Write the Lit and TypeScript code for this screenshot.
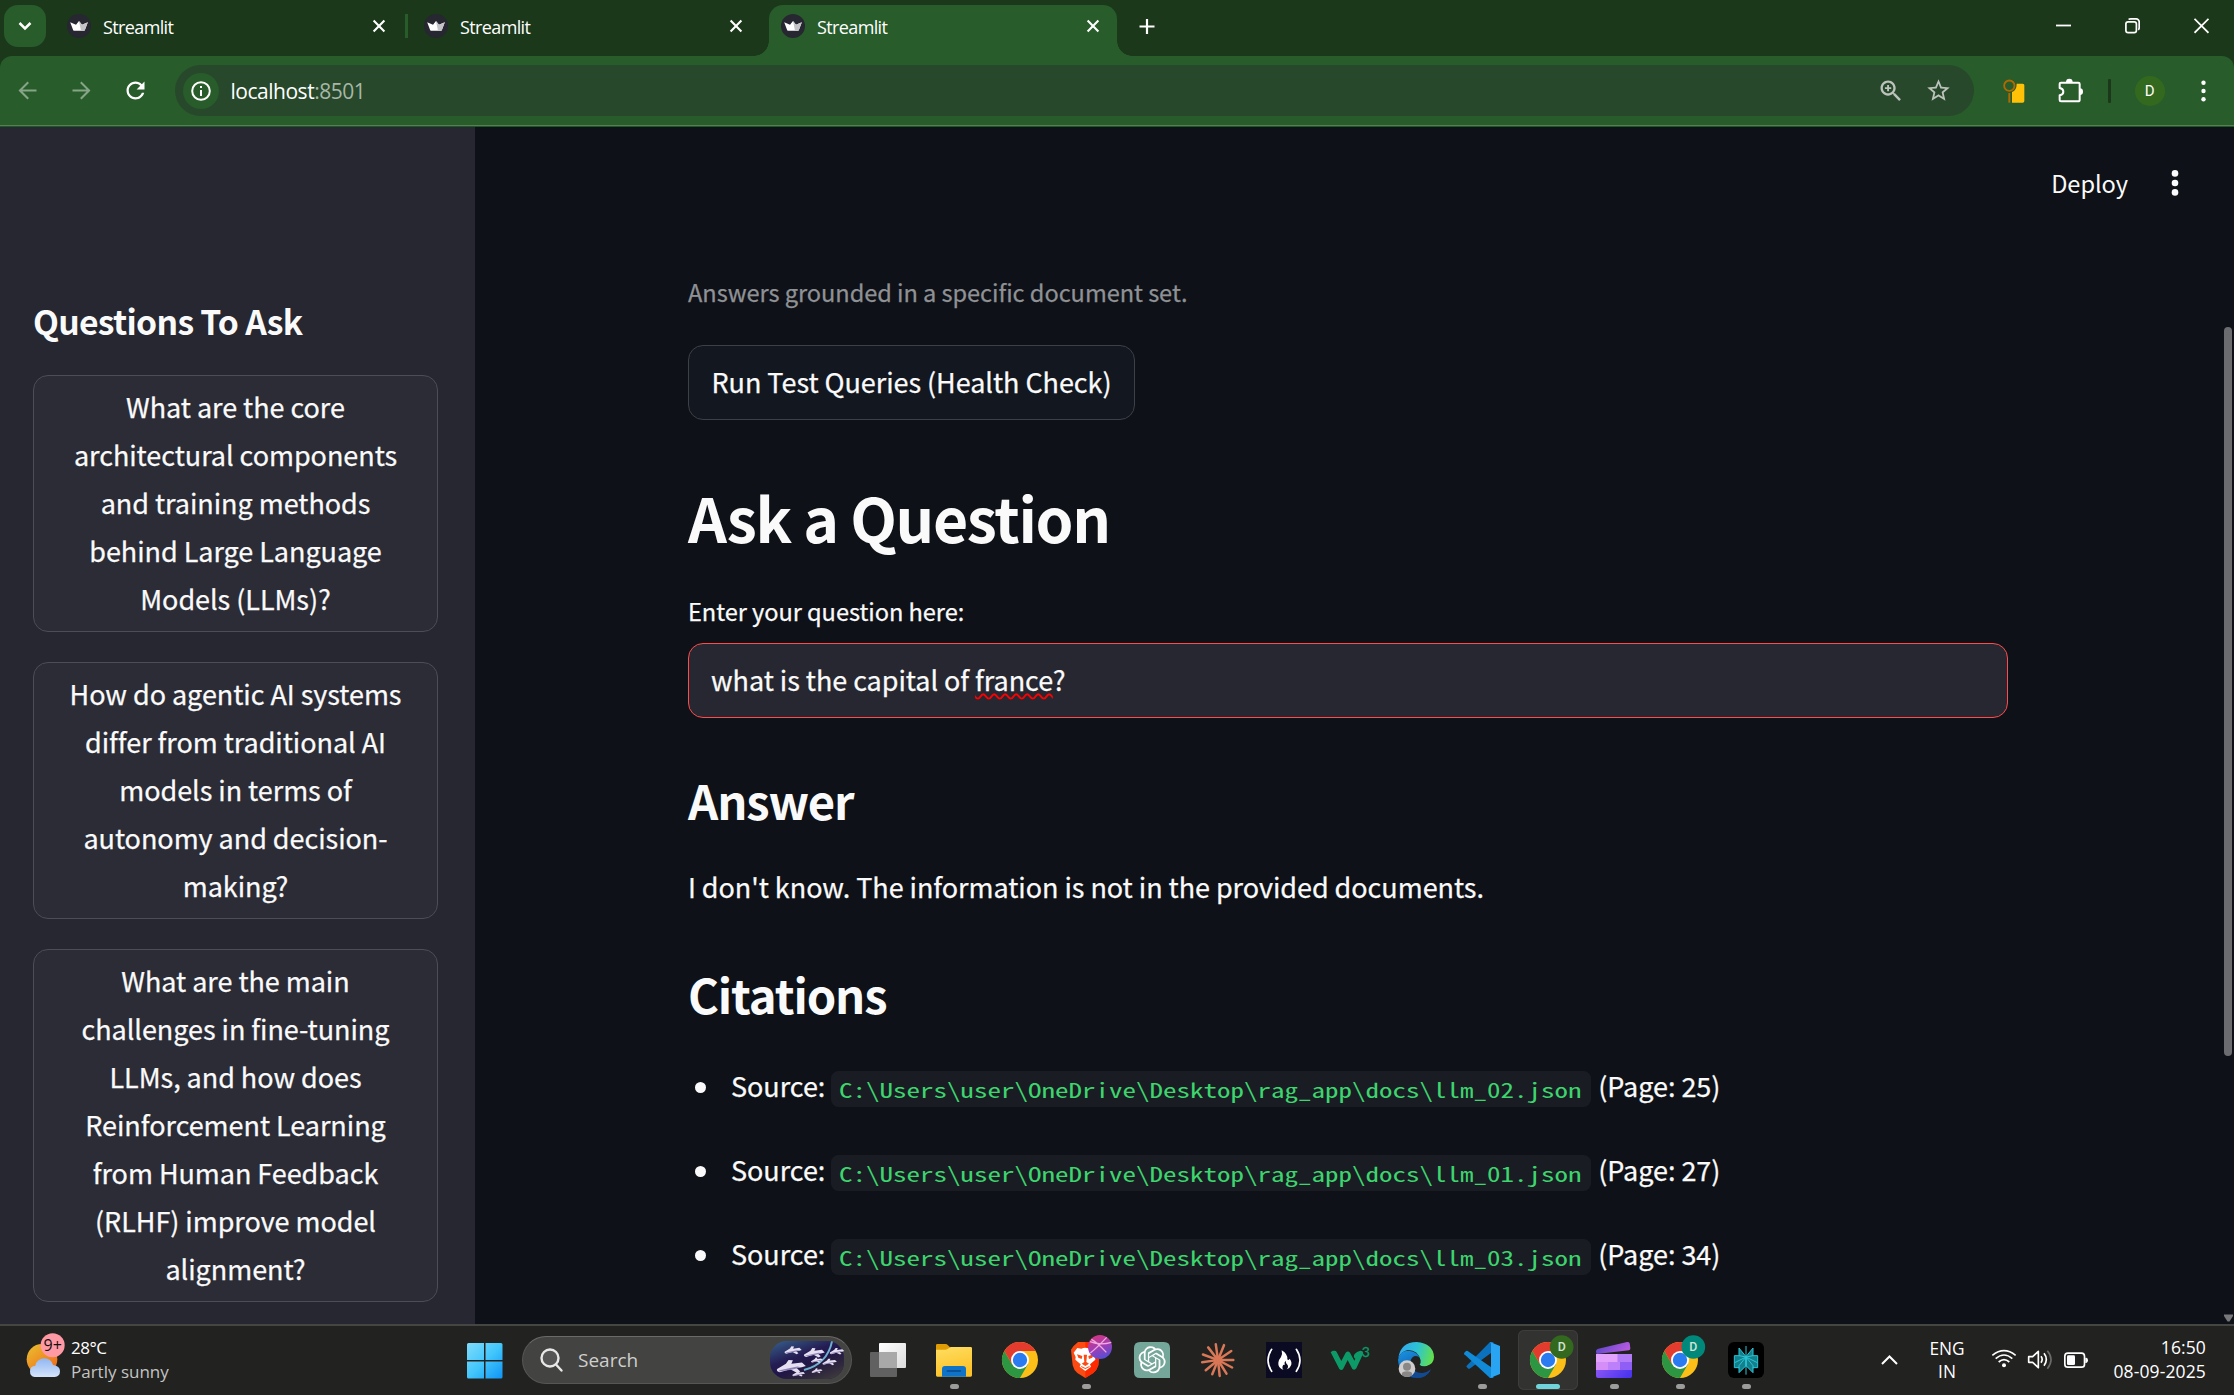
import { LitElement, html, css, svg } from "lit";
import { customElement } from "lit/decorators.js";
import { classMap } from "lit/directives/class-map.js";

const crown = html`<svg class="crown" viewBox="0 0 24 24" width="24" height="24">
  <circle cx="12" cy="12" r="12" fill="#262730" />
  <path d="M3.2 8.2 9 10.8 12 7l3 3.8 5.8-2.6-3 8a.8.8 0 0 1-.7.5H6.900a.8.8 0 0 1-.7-.5z" fill="#fff" />
  <path d="M12 7l3 3.800 5.800-2.600-3 8a.8.8 0 0 1-.7.5H14z" fill="#c4c4c8" />
</svg>`;

@customElement("tab-strip")
class TabStrip extends LitElement {
  static styles = css`
    :host { display: flex; height: 56px; background: #1b381b; color: #fff; font: 18px/24px "Open Sans", "Noto Sans", sans-serif; }
    .menu { width: 42px; height: 42px; margin: 5px 0 0 4px; border-radius: 14px; background: #285c2a; display: grid; place-items: center; }
    .tab { height: 51px; margin-top: 5px; display: flex; align-items: center; padding-bottom: 9px; box-sizing: border-box; }
    .tab .crown { flex: none; }
    .name { margin-left: 12px; flex: 1; letter-spacing: -0.62px; padding-top: 2px; }
    .first { width: 343px; margin-left: 21px; padding-left: 0; padding-right: 24px; }
    .second { width: 361px; padding-left: 16px; padding-right: 26px; border: 0; }
    .sep { width: 3px; height: 24px; margin-top: 14px; background: #285c2a; margin-left: -5px; }
    .active { position: relative; width: 348px; padding-left: 12px; padding-right: 17px; background: #285c2a; border-radius: 14px 14px 0 0; }
    .active::before, .active::after { content: ""; position: absolute; bottom: 0; width: 15px; height: 15px; }
    .active::before { right: 100%; background: radial-gradient(circle at 0 0, transparent 14.5px, #285c2a 15px); }
    .active::after { left: 100%; background: radial-gradient(circle at 100% 0, transparent 14.5px, #285c2a 15px); }
    .plus { margin: 18px 0 0 21px; }
    .win { margin-left: auto; display: flex; gap: 54px; padding: 17.5px 25px 0 0; }
  `;
  x() {
    return html`<svg width="14" height="14" viewBox="0 0 14 14"><path d="M1.600 1.600l10.800 10.800M12.400 1.600 1.600 12.400" stroke="#fff" stroke-width="2.100" /></svg>`;
  }
  render() {
    return html`
      <div class="menu"><svg width="14" height="10" viewBox="0 0 14 10"><path d="M1.500 2l5.500 5.500L12.500 2" fill="none" stroke="#fff" stroke-width="2.500" /></svg></div>
      <div class="tab first">${crown}<span class="name">Streamlit</span>${this.x()}</div>
      <div class="sep"></div>
      <div class="tab second">${crown}<span class="name">Streamlit</span>${this.x()}</div>
      <div class="tab active">${crown}<span class="name">Streamlit</span>${this.x()}</div>
      <svg class="plus" width="18" height="18" viewBox="0 0 18 18"><path d="M9 1v15M1.500 8.500h15" stroke="#fff" stroke-width="2.200" /></svg>
      <div class="win">
        <svg width="15" height="16" viewBox="0 0 15 16"><path d="M0 7.500h15" stroke="#fff" stroke-width="1.800" /></svg>
        <svg width="15" height="16" viewBox="0 0 15 16" fill="none" stroke="#fff" stroke-width="1.700"><rect x="0.900" y="3.800" width="10.500" height="10.800" rx="2.200" /><path d="M3.600 1.500Q4.200.9 6 .9h5.200a3 3 0 0 1 3 3v5.500q0 1.700-.9 2.400" /></svg>
        <svg width="15" height="16" viewBox="0 0 15 16"><path d="M.5.8l14 14M14.500.8l-14 14" stroke="#fff" stroke-width="1.800" /></svg>
      </div>`;
  }
}

@customElement("address-bar")
class AddressBar extends LitElement {
  static styles = css`
    :host { display: block; background: #1b381b; }
    .bar { display: flex; align-items: center; height: 71px; box-sizing: border-box; background: #285c2a; border-radius: 12px 12px 0 0; padding: 0 28.400px 2px 14px; box-shadow: inset 0 -1px #1f5528, inset 0 -2px #548052; }
    .nav { display: flex; gap: 27px; margin-right: 25.500px; }
    .box { flex: 1; display: flex; align-items: center; height: 51px; border-radius: 26px; background: #27482a; padding: 0 22px 0 8px; margin-right: 29px; }
    .info { width: 36px; height: 36px; border-radius: 50%; background: #285c2a; display: grid; place-items: center; margin-right: 12px; }
    .url { flex: 1; color: #fff; font: 21px/30px "Open Sans", "Noto Sans", sans-serif; letter-spacing: -0.480px; }
    .port { color: #a6b7a7; }
    .box .star { margin-left: 20px; }
    .sep { width: 3px; height: 24px; background: #1b381b; margin: 0 24px 0 25px; border-radius: 1px; }
    .ava { width: 30px; height: 30px; border-radius: 50%; background: #33691e; color: #fff; display: grid; place-items: center; font: 15px/30px Roboto, sans-serif; }
    .ext { margin-right: 33px; }
    .dots { margin-left: 36px; }
  `;
  render() {
    return html`<div class="bar">
      <div class="nav">
        <svg width="27" height="27" viewBox="0 0 24 24"><path d="M20 11.100H7.500l5.800-5.800L12 4l-8 8 8 8 1.300-1.300-5.800-5.800H20z" fill="#86a487" /></svg>
        <svg width="27" height="27" viewBox="0 0 24 24"><path d="M4 11.100h12.500l-5.800-5.800L12 4l8 8-8 8-1.300-1.300 5.800-5.800H4z" fill="#86a487" /></svg>
        <svg width="27" height="27" viewBox="0 0 24 24"><path d="M17.650 6.350C16.200 4.900 14.210 4 12 4c-4.420 0-7.990 3.580-7.990 8s3.570 8 7.990 8c3.730 0 6.840-2.550 7.730-6h-2.080c-.82 2.330-3.040 4-5.650 4-3.310 0-6-2.690-6-6s2.690-6 6-6c1.660 0 3.140.69 4.220 1.780L13 11h7V4l-2.350 2.350z" fill="#fff" /></svg>
      </div>
      <div class="box">
        <div class="info"><svg width="20" height="20" viewBox="0 0 20 20"><circle cx="10" cy="10" r="8.800" fill="none" stroke="#fff" stroke-width="2" /><path d="M9 5h2v2H9zM9 9h2v6H9z" fill="#fff" /></svg></div>
        <span class="url">localhost<span class="port">:8501</span></span>
        <svg width="28" height="28" viewBox="0 0 24 24"><path d="M15.500 14h-.79l-.28-.27C15.410 12.590 16 11.110 16 9.500 16 5.910 13.090 3 9.500 3S3 5.910 3 9.500 5.910 16 9.500 16c1.610 0 3.090-.59 4.230-1.570l.27.28v.79l5 4.990L20.490 19l-4.990-5zm-6 0C7.010 14 5 11.990 5 9.500S7.010 5 9.500 5 14 7.010 14 9.500 11.990 14 9.500 14z" fill="#bcc3bc" /><path d="M9.500 6.800v5.400M6.800 9.500h5.400" stroke="#bcc3bc" stroke-width="1.600" /></svg>
        <svg class="star" width="27" height="27" viewBox="0 0 24 24"><path d="M22 9.240l-7.190-.62L12 2 9.190 8.630 2 9.240l5.460 4.730L5.820 21 12 17.270 18.180 21l-1.630-7.030L22 9.240zM12 15.400l-3.760 2.270 1-4.280-3.320-2.880 4.380-.38L12 6.100l1.710 4.040 4.380.38-3.320 2.880 1 4.280L12 15.400z" fill="#bcc3bc" /></svg>
      </div>
      <svg class="ext" width="22" height="24" viewBox="671 235 66 72"><path d="M712 249h18q5 0 5 5v47q0 5-5 5h-32v-32q14-5 14-25z" fill="#ffc107" /><circle cx="690" cy="255" r="15.500" fill="none" stroke="#b26a00" stroke-width="5.500" /><path d="M690 277v29" stroke="#b26a00" stroke-width="6" /></svg>
      <svg width="25" height="25" viewBox="833 231 75 75"><path d="M842 245h52q4 0 4 4v47q0 5-5 5h-51q-4 0-4-4v-14q11-2 11-11t-11-11v-13q0-3 4-3z" fill="none" stroke="#fff" stroke-width="6" stroke-linejoin="round" /><path d="M857 243a10 10 0 0 1 20 0zM898 262a10 10 0 0 1 0 20z" fill="#fff" /></svg>
      <div class="sep"></div>
      <div class="ava">D</div>
      <svg class="dots" width="5" height="22" viewBox="0 0 5 22" fill="#fff"><circle cx="2.500" cy="2.700" r="2.200" /><circle cx="2.500" cy="11" r="2.200" /><circle cx="2.500" cy="19.300" r="2.200" /></svg>
    </div>`;
  }
}

const questions = [
  ["What are the core", "architectural components", "and training methods", "behind Large Language", "Models (LLMs)?"],
  ["How do agentic AI systems", "differ from traditional AI", "models in terms of", "autonomy and decision-", "making?"],
  ["What are the main", "challenges in fine-tuning", "LLMs, and how does", "Reinforcement Learning", "from Human Feedback", "(RLHF) improve model", "alignment?"],
];

@customElement("question-list")
class QuestionList extends LitElement {
  static styles = css`
    :host { display: flex; flex-direction: column; width: 475px; box-sizing: border-box; padding: 170.800px 37px 0 33px; background: #262730; color: #fafafa; font-family: "Noto Sans CJK SC", sans-serif; }
    h2 { margin: 0 0 32.200px; font-size: 33.700px; line-height: 45px; font-weight: 600; letter-spacing: -0.700px; white-space: nowrap; }
    .list { display: flex; flex-direction: column; gap: 30px; }
    .q { border: 1px solid #4c4d56; border-radius: 15px; background: #2b2c36; padding: 6.600px 0 8.400px; text-align: center; font-size: 27px; letter-spacing: -0.050px; line-height: 48px; white-space: nowrap; -webkit-text-stroke: 0.250px #fafafa; }
    .q div { height: 48px; }
  `;
  render() {
    return html`<h2>Questions To Ask</h2>
      <div class="list">${questions.map((q) => html`<div class="q">${q.map((l) => html`<div>${l}</div>`)}</div>`)}</div>`;
  }
}

const citations = [
  { file: "llm_02.json", page: 25 },
  { file: "llm_01.json", page: 27 },
  { file: "llm_03.json", page: 34 },
];

@customElement("answer-page")
class AnswerPage extends LitElement {
  static styles = css`
    :host { display: flex; flex: 1; min-width: 0; background: #0e1117; color: #fafafa; font-family: "Noto Sans CJK SC", sans-serif; font-size: 27px; line-height: 48px; letter-spacing: -0.050px; }
    .page { flex: 1; min-width: 0; }
    header { height: 112px; display: flex; justify-content: flex-end; align-items: center; gap: 37.400px; padding-right: 32.600px; box-sizing: border-box; font-size: 23.600px; }
    .col { padding: 31.700px 0 0 213px; width: 1320px; -webkit-text-stroke: 0.250px; }
    .caption { font-size: 23.600px; line-height: 42px; color: #8f9195; }
    .run { width: 447px; height: 75px; margin-top: 32.300px; box-sizing: border-box; border: 1px solid #3e4047; border-radius: 15px; background: #131720; display: flex; align-items: center; justify-content: center; padding-bottom: 1.800px; white-space: nowrap; }
    h1 { margin: 56px 0 0; font-size: 60.700px; line-height: 81px; font-weight: 600; letter-spacing: -1.330px; -webkit-text-stroke: 0; }
    .label { margin-top: 32.700px; font-size: 23.600px; line-height: 42px; }
    .field { margin-top: 11.300px; height: 75px; box-sizing: border-box; border: 1px solid #ff4b4b; border-radius: 15px; background: #262730; padding: 11.600px 22px 0; }
    .typo { text-decoration: underline wavy #f00 1.500px; text-underline-offset: 2px; text-decoration-skip-ink: none; }
    h2 { margin: 49.900px 0 0; font-size: 47.200px; line-height: 63px; font-weight: 600; letter-spacing: -1.100px; -webkit-text-stroke: 0; }
    .cit { margin-top: 50.700px; }
    p { margin: 32.200px 0 0; }
    .list { margin-top: 37.600px; display: flex; flex-direction: column; gap: 36px; }
    .item { display: flex; align-items: center; height: 48px; white-space: nowrap; padding-left: 7px; }
    .dot { width: 11px; height: 11px; border-radius: 50%; background: #fafafa; margin-right: 25px; margin-top: 2px; }
    .code { font-family: "Noto Sans Mono CJK SC", "DejaVu Sans Mono", monospace; color: #3dd56d; background: #1a1c24; border-radius: 7.500px; height: 36.500px; line-height: 36.500px; padding: 0 7px 0 8px; margin: 5px 7px 0 6px; font-size: 20.500px; letter-spacing: 0; width: 745px; -webkit-text-stroke: 0; }
    .code span { display: inline-block; transform-origin: 0 50%; transform: scaleX(1.317); }
    .bar { width: 10px; display: flex; flex-direction: column; justify-content: space-between; padding: 200px 0 2px; }
    .thumb { width: 8px; height: 729px; border-radius: 4px; background: #6b6c70; }
  `;
  render() {
    return html`<div class="page">
        <header><span>Deploy</span><svg width="26" height="26" viewBox="0 0 26 26" fill="#fafafa"><circle cx="10" cy="3.400" r="3.300" /><circle cx="10" cy="13" r="3.300" /><circle cx="10" cy="22.400" r="3.300" /></svg></header>
        <div class="col">
          <div class="caption">Answers grounded in a specific document set.</div>
          <div class="run">Run Test Queries (Health Check)</div>
          <h1>Ask a Question</h1>
          <div class="label">Enter your question here:</div>
          <div class="field">what is the capital of <span class="typo">france</span>?</div>
          <h2>Answer</h2>
          <p>I don't know. The information is not in the provided documents.</p>
          <h2 class="cit">Citations</h2>
          <div class="list">
            ${citations.map((c) => html`<div class="item"><i class="dot"></i><span>Source:</span><div class="code"><span>C:\\Users\\user\\OneDrive\\Desktop\\rag_app\\docs\\${c.file}</span></div><span>(Page: ${c.page})</span></div>`)}
          </div>
        </div>
      </div>
      <div class="bar"><div class="thumb"></div><svg width="9" height="8" viewBox="0 0 9 8"><path d="M0 .5h9v1.500L5.500 7.500h-2L0 2z" fill="#77787b" /></svg></div>`;
  }
}

const chromeMark = svg`<g transform="translate(54 54)">
  <circle r="54" fill="#fcbf17" />
  <path d="M-46.770-27A54 54 0 0 0 0 54L23.380 13.500 0 0-23.380 13.500Z" fill="#2c9643" />
  <path d="M-46.770-27A54 54 0 0 1 46.770-27L0-27V0L-23.380 13.500Z" fill="#e33b2e" />
  <circle r="27" fill="#fff" /><circle r="21.500" fill="#2a7af0" /></g>`;

const badge = (x: number, color: string) => svg`<circle cx="${x}" cy="15" r="35.500" fill="${color}" />
  <text x="${x}" y="28" text-anchor="middle" font-family="Roboto, sans-serif" font-size="37" font-weight="500" fill="#d5e3d5">D</text>`;

const ray = [0, 28, 58, 84, 112, 140, 172, 200, 232, 262, 292, 326];

const apps = [
  { run: false, icon: svg`<g transform="translate(-72 -96)"><rect x="99" y="99" width="81" height="75" rx="3" fill="url(#tvw)" /><rect x="72" y="126" width="81" height="75" rx="3" fill="#777" fill-opacity=".75" /><path d="M99 126h54v48H99z" fill="#a9a9a9" /></g>
    <defs><linearGradient id="tvw" x2="1" y2="1"><stop stop-color="#fff" /><stop offset="1" stop-color="#dcdcdc" /></linearGradient></defs>` },
  { run: true, icon: svg`<g transform="translate(-288 -96)"><path d="M288 106q0-4 4-4h24q5 0 8 4l8 8v14h-44z" fill="#e09c05" /><path d="M288 119h28q6 0 10-4l6-4h60q4 0 4 4v81q0 4-4 4H292q-4 0-4-4z" fill="url(#fold)" /><path d="M306 200v-23q0-9 9-9h54q9 0 9 9v23z" fill="#0f73c7" /><path d="M322 183h39" stroke="#0a4a8c" stroke-width="5" stroke-linecap="round" /></g>
    <defs><linearGradient id="fold" x2=".3" y2="1"><stop stop-color="#ffde62" /><stop offset="1" stop-color="#fcc229" /></linearGradient></defs>` },
  { run: false, icon: chromeMark },
  { run: true, icon: svg`<g transform="translate(-684 -96)"><path d="M714 96h44l12 11 8 2 0 20-3 37q-4 14-15 23l-24 15-24-15q-11-9-14-23l-4-37-1-10 7-10z" fill="#fb4a12" /><path d="M736 96h22l12 11 8 2v20l-3 37q-4 14-15 23l-24 15z" fill="#ff2a00" /><path d="M712 114l12 2q12-5 24 0l12-2 11 14-6 13 1 8-16 14 3 7-17 13-17-13 3-7-16-14 1-8-6-13z" fill="#fff" /><path d="M711 133l16 5-2 9-10-4zM761 133l-16 5 2 9 10-4zM731 134h10l-2 22 8 5-11 7-11-7 8-5zM722 167l14 7 14-7-3 5-11 5-11-5z" fill="#fb4a12" />
    <circle cx="780" cy="111" r="36" fill="url(#orb)" /><path d="M750 95q30 12 64 2M751 129q20-16 49-47M754 88q16 8 45 39" fill="none" stroke="#f1a8de" stroke-width="4" /></g>
    <defs><linearGradient id="orb" x1=".3" x2=".7" y2="1"><stop stop-color="#d5367f" /><stop offset=".5" stop-color="#a03db5" /><stop offset="1" stop-color="#4f50d8" /></linearGradient></defs>` },
  { run: false, icon: svg`<path d="M18 0h72q18 0 18 18v90H18Q0 108 0 90V18Q0 0 18 0z" fill="#74a799" /><g transform="translate(13.500 12.500) scale(3.400)"><path fill="#fff" d="M22.2819 9.8211a5.9847 5.9847 0 0 0-.5157-4.9108 6.0462 6.0462 0 0 0-6.5098-2.9A6.0651 6.0651 0 0 0 4.9807 4.1818a5.9847 5.9847 0 0 0-3.9977 2.9 6.0462 6.0462 0 0 0 .7427 7.0966 5.98 5.98 0 0 0 .511 4.9107 6.051 6.051 0 0 0 6.5146 2.9001A5.9847 5.9847 0 0 0 13.2599 24a6.0557 6.0557 0 0 0 5.7718-4.2058 5.9894 5.9894 0 0 0 3.9977-2.9001 6.0557 6.0557 0 0 0-.7475-7.0729zm-9.022 12.6081a4.4755 4.4755 0 0 1-2.8764-1.0408l.1419-.0804 4.7783-2.7582a.7948.7948 0 0 0 .3927-.6813v-6.7369l2.02 1.1686a.071.071 0 0 1 .038.052v5.5826a4.504 4.504 0 0 1-4.4945 4.4944zm-9.6607-4.1254a4.4708 4.4708 0 0 1-.5346-3.0137l.142.0852 4.783 2.7582a.7712.7712 0 0 0 .7806 0l5.8428-3.3685v2.3324a.0804.0804 0 0 1-.0332.0615L9.74 19.9502a4.4992 4.4992 0 0 1-6.1408-1.6464zM2.3408 7.8956a4.485 4.485 0 0 1 2.3655-1.9728V11.6a.7664.7664 0 0 0 .3879.6765l5.8144 3.3543-2.0201 1.1685a.0757.0757 0 0 1-.071 0l-4.8303-2.7865A4.504 4.504 0 0 1 2.3408 7.872zm16.5963 3.8558L13.1038 8.364 15.1192 7.2a.0757.0757 0 0 1 .071 0l4.8303 2.7913a4.4944 4.4944 0 0 1-.6765 8.1042v-5.6772a.79.79 0 0 0-.407-.667zm2.0107-3.0231l-.142-.0852-4.7735-2.7818a.7759.7759 0 0 0-.7854 0L9.409 9.2297V6.8974a.0662.0662 0 0 1 .0284-.0615l4.8303-2.7866a4.4992 4.4992 0 0 1 6.6802 4.66zM8.3065 12.863l-2.02-1.1638a.0804.0804 0 0 1-.038-.0567V6.0742a4.4992 4.4992 0 0 1 7.3757-3.4537l-.142.0805L8.704 5.459a.7948.7948 0 0 0-.3927.6813zm1.0976-2.3654l2.602-1.4998 2.6069 1.4998v2.9994l-2.5974 1.4997-2.6067-1.4997Z" /></g>` },
  { run: false, icon: svg`<g transform="translate(54 54)" stroke="#d97757" stroke-width="7.500" stroke-linecap="round"><circle r="13" fill="#d97757" stroke="none" />${ray.map((a) => svg`<path d="M8 0H${a % 56 === 0 ? 46 : 48}" transform="rotate(${a})" />`)}</g>` },
  { run: false, icon: svg`<g transform="translate(-1278 -96)"><path d="M1278 96h108v108h-108z" fill="#0a0a23" /><path d="M1295 118q-22 33 0 66M1369 118q22 33 0 66" fill="none" stroke="#fff" stroke-width="5" stroke-linecap="round" /><path d="M1325 121q18 10 17 27 3 5 7-2 9 12 3 22-3 8-12 10 8-8 1-15-4-4-4-11-5 5-3 11 1 4-4 1-6 10 1 16-18-7-16-22 1-9 8-17 5-8 2-20z" fill="#fff" /></g>` },
  { run: false, icon: svg`<g transform="translate(-94 -96)"><path d="M96 122l6 0q4 0 6 4l14 27 13-25q7-7 13 0l13 24 3-6q-8-5-2-14 6-8 17-10 8 0 9 7l-2 5-19 41q-5 7-12 2l-14-27-14 28q-6 5-11-1l-26-50z" fill="#0b9a68" /><text x="183" y="142" font-family="Lato, sans-serif" font-size="42" fill="#0b9a68" stroke="#0b9a68">3</text></g>` },
  { run: false, icon: svg`<defs><linearGradient id="e1" x1="0" x2="1" y1=".3" y2=".5"><stop stop-color="#35a8ee" /><stop offset=".5" stop-color="#2cc3d5" /><stop offset="1" stop-color="#63e04b" /></linearGradient><linearGradient id="e2" x2=".6" y2="1"><stop stop-color="#1a96e2" /><stop offset="1" stop-color="#0c4aa0" /></linearGradient></defs>
    <path d="M1 48Q8 0 56 0q50 4 52 45 0 20-22 27-16 2-21-4 4-5 3-13Q60 24 30 24 8 28 1 48z" fill="url(#e1)" /><path d="M0 54Q4 26 32 26q26 2 34 22-8-9-18-5-14 8-10 28 8 24 34 24 16-1 27-13-12 26-43 26Q4 104 0 54z" fill="url(#e2)" /><path d="M38 68q10 27 36 25 14-2 25-11-12 26-43 26-22-12-18-40z" fill="#114a91" /><circle cx="27" cy="80" r="25" fill="#cfcecd" /><circle cx="27" cy="74" r="12" fill="#8a8886" /><path d="M11 98q0-10 16-10t16 10q-6 7-16 7t-16-7z" fill="#8a8886" />` },
  { run: true, icon: svg`<path d="M78 0 8 71q-2 2 0 4l5 5q2 1 4 0L88 28V0z" fill="#0b71bd" /><path d="M78 108 1 37q-2-3 0-5l5-5q3-1 5 0l77 53v28z" fill="#118bd8" /><path d="M78 0l30 12v84l-30 12q3-2 3-7V7q0-5-3-7z" fill="#28a4f2" />` },
  { run: true, active: true, icon: svg`${chromeMark}${badge(95, "#33691e")}` },
  { run: true, icon: svg`<defs><linearGradient id="cc" x2="1" y2=".3"><stop stop-color="#5345c8" /><stop offset="1" stop-color="#b45ae0" /></linearGradient><linearGradient id="cd" x2="1" y2=".2"><stop stop-color="#8a55f4" /><stop offset="1" stop-color="#4b35ee" /></linearGradient></defs>
    <path d="M0 30q-1-8 7-10L93 0q6-1 8 4l2 14q1 5-4 7L2 36z" fill="url(#cc)" /><path d="M0 36h108v48H0z" fill="#bb80fa" /><path d="M0 36h65v24H0z" fill="#e3a2fb" /><path d="M65 36h43v24H79V60H65z" fill="#b37bf8" /><path d="M0 60h36v24H0z" fill="#d58df8" /><path d="M72 60h36v24H72z" fill="#8f5ef5" /><path d="M0 84h108v18q0 6-6 6H6q-6 0-6-6z" fill="url(#cd)" />` },
  { run: true, icon: svg`${chromeMark}${badge(94, "#00897b")}` },
  { run: true, icon: svg`<rect width="108" height="108" rx="18" fill="#000" /><g fill="#13808c" stroke="#2bc5d6" stroke-width="3"><path d="M54 44 33 18v23H19v36h14v15l21-21zM54 44l21-26v23h14v36H75v15L54 71z" /><path d="M54 12v86M33 41l21 4 21-4M54 45 33 71v8M54 45l21 26v8M20 62l34-17 34 17" fill="none" /></g>` },
];

const plane = (x: number, y: number, s: number) => svg`<g transform="translate(${x} ${y}) scale(${s}) rotate(-10)"><path d="M0 12 18 5l6-6 8 2-4 6 20 1 6 8-8 1-10-1 6 8-6 2-12-9L4 19q-7-3-4-7z" fill="#e6dff2" /><path d="M2 17l24 1 20-1-8-3-34 1z" fill="#8f83b5" /></g>`;

@customElement("task-bar")
class TaskBar extends LitElement {
  static styles = css`
    :host { display: flex; height: 71px; box-sizing: border-box; border-top: 2px solid #454544; background: #222220; color: #fff; font: 17px/24px "Open Sans", "Noto Sans", sans-serif; }
    svg { overflow: visible; flex: none; }
    .weather { display: flex; width: 466.500px; padding-left: 26px; box-sizing: border-box; }
    .wicon { margin-top: 6px; }
    .wt { margin: 9.500px 0 0 6px; letter-spacing: -0.450px; white-space: nowrap; }
    .dim { color: #c4c4c3; letter-spacing: 0; }
    .win { margin: 17px 19.500px 0 0; }
    .search { width: 330px; height: 48px; margin-top: 10px; box-sizing: border-box; border: 1px solid #565655; border-top-color: #6a6a69; border-radius: 24px; background: #434341; display: flex; align-items: center; padding: 0 7px 0 17px; color: #cfcfce; font-size: 19px; }
    .search span { flex: 1; margin-left: 15px; letter-spacing: 0; }
    .apps { display: flex; margin-left: 6px; padding-top: 4px; }
    .app { width: 60px; height: 60px; margin-right: 6px; display: flex; flex-direction: column; align-items: center; padding-top: 12px; box-sizing: border-box; border-radius: 6px; }
    .app.on { background: #323231; box-shadow: inset 0 0 0 1px #3d3d3c; }
    .mark { width: 9px; height: 5px; border-radius: 2.500px; background: #9c9c9b; margin-top: 6px; }
    .on .mark { width: 24px; background: #6fd5da; }
    .tray { margin-left: auto; display: flex; padding-right: 28px; }
    .up { margin: 29px 31px 0 0; }
    .lang { text-align: center; margin: 11px 27px 0 0; line-height: 23.300px; width: 36px; font-size: 17.300px; }
    .sys { display: flex; gap: 12px; margin: 24px 0 0; }
    .clock { margin: 9px 0 0 24px; text-align: right; white-space: nowrap; width: 94px; font-size: 17.500px; letter-spacing: 0.120px; }
  `;
  render() {
    return html`
      <div class="weather">
        <svg class="wicon" width="39" height="44" viewBox="78 36 117 132">
          <defs><linearGradient id="sun" x2=".8" y2="1"><stop stop-color="#e9c22f" /><stop offset=".9" stop-color="#f0701c" /></linearGradient><linearGradient id="cl" x2="0" y2="1"><stop stop-color="#8fb6f2" /><stop offset="1" stop-color="#d5e4fb" /></linearGradient></defs>
          <circle cx="126" cy="118" r="46" fill="url(#sun)" /><path d="M104 171q-14-1-14-17t16-17q4-20 26-22 22 1 27 20 21 2 21 19 0 16-16 17z" fill="url(#cl)" />
          <circle cx="158" cy="76" r="36" fill="#ff99a4" /><text x="158" y="92" text-anchor="middle" font-family="Open Sans, sans-serif" font-size="48" fill="#111">9+</text>
        </svg>
        <div class="wt"><div>28°C</div><div class="dim">Partly sunny</div></div>
      </div>
      <svg class="win" width="36" height="36" viewBox="0 0 36 36"><defs><linearGradient id="wl" gradientUnits="userSpaceOnUse" x1="0" y1="0" x2="36" y2="36"><stop stop-color="#7fdcfb" /><stop offset=".5" stop-color="#42c6fb" /><stop offset="1" stop-color="#0d93f6" /></linearGradient></defs><path d="M1.500 0H17v17H0V1.500Q0 0 1.500 0zM18.500 0H34q1.500 0 1.500 1.500V17h-17zM0 18.500h17v17H1.500Q0 35.500 0 34zM18.500 18.500h17V34q0 1.500-1.500 1.500H18.500z" fill="url(#wl)" /></svg>
      <div class="search">
        <svg width="23" height="24" viewBox="0 0 23 24" fill="none" stroke="#e8e8e8" stroke-width="2.400"><circle cx="10" cy="10" r="8.500" fill="#555" /><path d="M16 16.500l5.500 6" stroke-linecap="round" /></svg>
        <span>Search</span>
        <svg width="74" height="38" viewBox="60 47 222 114"><defs><linearGradient id="sky" x2=".7" y2="1"><stop stop-color="#36618c" /><stop offset=".45" stop-color="#241c52" /><stop offset="1" stop-color="#1b0a33" /></linearGradient><linearGradient id="fade" x1=".6" y1=".5" x2="1" y2="1"><stop stop-color="#434341" stop-opacity="0" /><stop offset="1" stop-color="#434341" /></linearGradient></defs>
          <rect x="60" y="47" width="222" height="114" rx="50" fill="url(#sky)" /><rect x="60" y="47" width="222" height="114" rx="50" fill="url(#fade)" /><path d="M246 48q-14 68-84 86" fill="none" stroke="#6fb0d0" stroke-width="6" />
          ${plane(78, 112, 1.600)}${plane(102, 68, 0.950)}${plane(160, 74, 1.150)}${plane(238, 72, 0.800)}${plane(182, 100, 0.650)}${plane(216, 104, 0.800)}${plane(126, 140, 0.700)}${plane(184, 132, 0.600)}
        </svg>
      </div>
      <div class="apps">${apps.map((a) => html`<div class=${classMap({ app: true, on: !!(a as any).active })}><svg width="36" height="36" viewBox="0 0 108 108">${a.icon}</svg>${a.run ? html`<div class="mark"></div>` : ""}</div>`)}</div>
      <div class="tray">
        <svg class="up" width="17" height="10" viewBox="0 0 17 10"><path d="M1 9l7.500-7.500L16 9" fill="none" stroke="#fff" stroke-width="2" /></svg>
        <div class="lang">ENG<br />IN</div>
        <div class="sys">
          <svg width="24" height="20" viewBox="636 182 72 60" fill="none" stroke="#fff" stroke-width="5"><circle cx="672" cy="228" r="6" fill="#fff" stroke="none" /><path d="M656 218q16-14 32 0M647 208q25-22 50 0M637 198q35-28 70 0" /></svg>
          <svg width="24" height="20" viewBox="743 182 72 60" fill="none" stroke="#fff" stroke-width="5" stroke-linejoin="round"><path d="M745 202h12l17-16v49l-17-16h-12zM782 201q7 9 0 19M791 192q14 18 0 37" /><path d="M801 184q22 26 0 54" stroke="#6a6a69" /></svg>
          <svg width="24" height="20" viewBox="852 180 72 60"><rect x="854.500" y="189.500" width="59" height="42" rx="9" fill="none" stroke="#fff" stroke-width="5" /><rect x="861" y="196" width="24" height="29" rx="4" fill="#fff" /><path d="M916 203h3q5 1 5 8t-5 8h-3z" fill="#fff" /></svg>
        </div>
        <div class="clock">16:50<br />08-09-2025</div>
      </div>`;
  }
}

@customElement("app-root")
class AppRoot extends LitElement {
  static styles = css`
    :host { display: flex; flex-direction: column; width: 2234px; height: 1395px; overflow: hidden; background: #0e1117; }
    .body { flex: 1; min-height: 0; display: flex; overflow: hidden; }
  `;
  render() {
    return html`<tab-strip></tab-strip><address-bar></address-bar>
      <div class="body"><question-list></question-list><answer-page></answer-page></div>
      <task-bar></task-bar>`;
  }
}
